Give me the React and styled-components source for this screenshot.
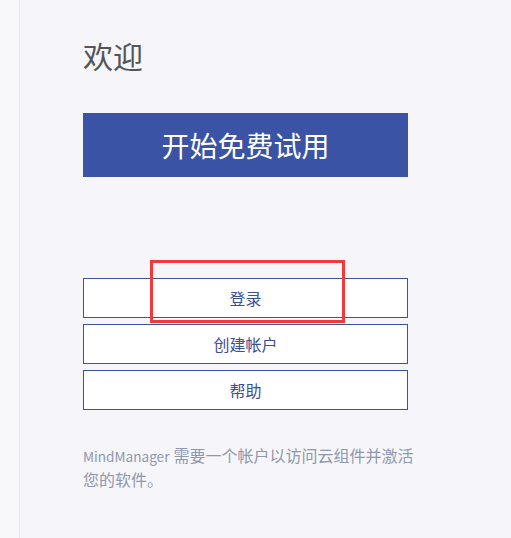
import React from 'react'
import styled, { createGlobalStyle } from 'styled-components'

const GlobalStyle = createGlobalStyle`
	html, body {
		margin: 0;
		padding: 0;
		background: #f6f6fa;
	}

	body {
		font-family: 'Noto Sans CJK SC', 'Noto Sans', sans-serif;
	}
`

const Page = styled('div')`
	display: flex;
	width: 511px;
	height: 538px;
	overflow: hidden;
	background: #f6f6fa;
`

const Rail = styled('div')`
	width: 19px;
	flex-shrink: 0;
	background: #f8f8fb;
	border-right: 1px solid #e9e9ee;
`

const Panel = styled('div')`
	display: flex;
	flex-direction: column;
	width: 325px;
	padding: 33px 0 0 63px;
`

const Title = styled('h1')`
	margin: 0;
	font-size: 30px;
	font-weight: 400;
	line-height: 44px;
	color: #555555;
	font-family: 'Noto Sans CJK SC', sans-serif;
`

const TrialButton = styled('button')`
	margin-top: 36px;
	height: 64px;
	border: none;
	background: #3a53a4;
	color: #ffffff;
	font-size: 28px;
	font-family: 'Noto Sans CJK SC', sans-serif;
	cursor: pointer;
`

const Actions = styled('div')`
	position: relative;
	display: flex;
	flex-direction: column;
	gap: 6px;
	margin-top: 101px;
`

const ActionButton = styled('button')`
	height: 40px;
	border: 1px solid #3a53a4;
	background: #ffffff;
	color: #3c4e96;
	font-size: 16px;
	font-family: 'Noto Sans CJK SC', sans-serif;
	cursor: pointer;
	padding: 0;
`

const Highlight = styled('div')`
	position: absolute;
	left: 67px;
	top: -18px;
	width: 189px;
	height: 57px;
	border: 3px solid #f23a3a;
	pointer-events: none;
`

const Note = styled('p')`
	margin: 34px 0 0;
	width: 334px;
	font-size: 16px;
	line-height: 23px;
	color: #9096ae;
	font-family: 'Noto Sans CJK SC', sans-serif;
`

const Brand = styled('span')`
	display: inline-block;
	font-size: 13.6px;
	line-height: 23px;
	margin-right: 4px;
`

const App = () => (
	<>
		<GlobalStyle />
		<Page>
			<Rail />
			<Panel>
				<Title>欢迎</Title>
				<TrialButton>开始免费试用</TrialButton>
				<Actions>
					<ActionButton>登录</ActionButton>
					<ActionButton>创建帐户</ActionButton>
					<ActionButton>帮助</ActionButton>
					<Highlight />
				</Actions>
				<Note>
					<Brand>MindManager</Brand>需要一个帐户以访问云组件并激活您的软件。
				</Note>
			</Panel>
		</Page>
	</>
)

export default App
